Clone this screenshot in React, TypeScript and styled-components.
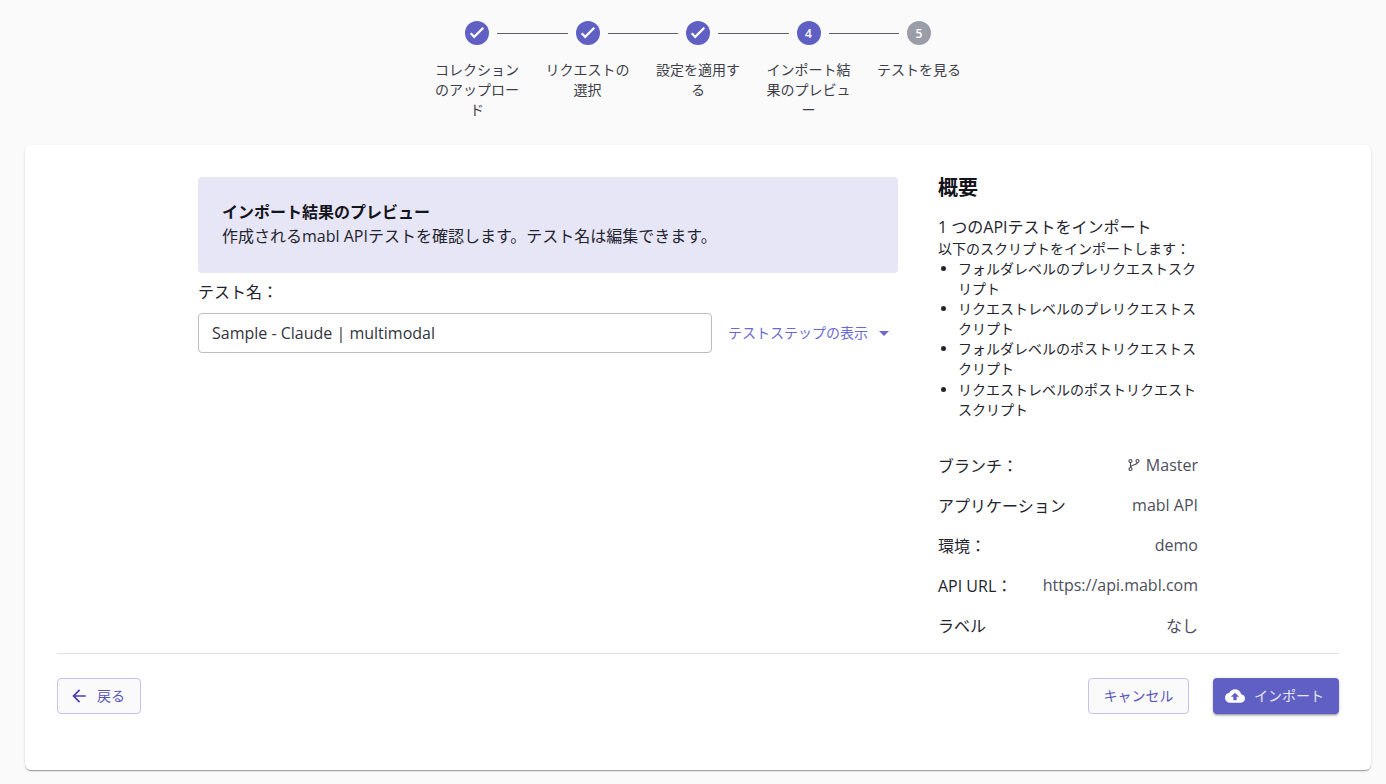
import React from "react";
import styled, { createGlobalStyle } from "styled-components";

const Global = createGlobalStyle`
  html, body { margin: 0; padding: 0; background: #fafafa; }
  body { font-family: "Open Sans", "Noto Sans CJK JP", sans-serif; color: #1c1c24; }
  * { box-sizing: border-box; }
`;

const Page = styled.div`
  width: 1386px;
  height: 784px;
  overflow: hidden;
  padding-left: 25px;
`;

const Content = styled.div`
  width: 1346px;
`;

const Stepper = styled.ol`
  list-style: none;
  margin: 0;
  padding: 21px 0 0;
  height: 145px;
  display: flex;
  justify-content: center;
`;

const Step = styled.li`
  width: 110.5px;
  padding: 0 8px;
  display: flex;
  flex-direction: column;
  align-items: center;
  position: relative;
`;

const Connector = styled.span`
  position: absolute;
  top: 12px;
  left: calc(-50% + 20px);
  right: calc(50% + 20px);
  height: 1px;
  background: #5d5e6b;
`;

const Circle = styled.span<{ $done: boolean }>`
  width: 24px;
  height: 24px;
  border-radius: 50%;
  background: ${(p) => (p.$done ? "#5f5fc4" : "#9a9ca8")};
  color: #fff;
  font-size: 12px;
  font-weight: 600;
  display: flex;
  align-items: center;
  justify-content: center;
`;

const StepLabel = styled.span`
  margin-top: 15px;
  width: 100%;
  font-size: 14px;
  line-height: 20px;
  text-align: center;
  color: #3d3e4a;
`;

const Card = styled.main`
  height: 625px;
  background: #fff;
  border-radius: 6px;
  padding: 32px 32px 0;
  box-shadow: 0 2px 1px -1px rgba(0,0,0,.2), 0 1px 1px 0 rgba(0,0,0,.14), 0 1px 3px 0 rgba(0,0,0,.12);
`;

const Columns = styled.div`
  height: 476px;
  display: flex;
  justify-content: center;
  gap: 40px;
`;

const LeftColumn = styled.section`
  width: 700px;
`;

const Banner = styled.div`
  height: 96px;
  padding: 23px 24px 0;
  border-radius: 4px;
  background: #e7e6f6;
  font-size: 16px;
  line-height: 24px;
  color: #24242e;
`;

const BannerTitle = styled.div`
  font-weight: 700;
  font-size: 16px;
  line-height: 24px;
  color: #14141c;
`;

const FieldLabel = styled.div`
  margin-top: 7px;
  font-size: 16px;
  line-height: 24px;
  color: #24242e;
`;

const FieldRow = styled.div`
  margin-top: 9px;
  display: flex;
  align-items: center;
`;

const NameInput = styled.input`
  width: 514px;
  height: 40px;
  padding: 0 13px;
  border: 1px solid #bcbcc2;
  border-radius: 4px;
  outline: none;
  font: 400 16px "Open Sans", "Noto Sans CJK JP", sans-serif;
  color: #33343e;
  background: #fff;
`;

const StepsToggle = styled.button`
  margin-left: 16px;
  padding: 0 0 2px;
  border: 0;
  background: none;
  display: flex;
  align-items: center;
  font: 400 14px "Open Sans", "Noto Sans CJK JP", sans-serif;
  color: #6a6ad0;
`;

const Caret = styled.span`
  margin-left: 11px;
  margin-top: 2px;
  width: 0;
  height: 0;
  border-left: 5px solid transparent;
  border-right: 5px solid transparent;
  border-top: 5px solid #6a6ad0;
`;

const Summary = styled.aside`
  width: 260px;
`;

const SummaryTitle = styled.h2`
  margin: 0;
  font-size: 20px;
  font-weight: 700;
  line-height: 22px;
  color: #14141c;
`;

const ImportCount = styled.div`
  margin-top: 16px;
  font-size: 16px;
  line-height: 24px;
  color: #24242e;
`;

const ImportNote = styled.div`
  font-size: 14px;
  line-height: 20px;
  color: #24242e;
`;

const ScriptList = styled.ul`
  margin: 0 0 25px;
  padding: 0 0 0 20px;
  font-size: 14px;
  line-height: 20.1px;
  color: #24242e;
`;

const Row = styled.div`
  height: 40px;
  display: flex;
  align-items: center;
  justify-content: space-between;
  font-size: 16px;
`;

const RowLabel = styled.span`
  color: #24242e;
`;

const RowValue = styled.span`
  display: flex;
  align-items: center;
  gap: 5px;
  color: #4d4e5c;
`;

const Footer = styled.footer`
  border-top: 1px solid #e0e0e4;
  padding-top: 24px;
  display: flex;
  justify-content: space-between;
`;

const Actions = styled.div`
  display: flex;
  gap: 24px;
`;

const OutlineButton = styled.button`
  height: 36px;
  padding: 0 14.5px 2px;
  display: flex;
  align-items: center;
  border: 1px solid #c5c3ee;
  border-radius: 4px;
  background: #fafafa;
  font: 400 14px "Open Sans", "Noto Sans CJK JP", sans-serif;
  color: #5a55b8;
`;

const BackButton = styled(OutlineButton)`
  padding: 0 15px 0 11px;
  gap: 8px;
`;

const BackText = styled.span`
  padding-bottom: 2px;
`;

const PrimaryButton = styled.button`
  height: 36px;
  padding: 0 15px 0 12px;
  display: flex;
  align-items: center;
  gap: 9px;
  border: 0;
  border-radius: 4px;
  background: #5f5fc4;
  font: 400 14px "Open Sans", "Noto Sans CJK JP", sans-serif;
  color: #e8e8f8;
  box-shadow: 0 3px 1px -2px rgba(0,0,0,.2), 0 2px 2px 0 rgba(0,0,0,.14), 0 1px 5px 0 rgba(0,0,0,.12);
`;

const PrimaryText = styled.span`
  padding-bottom: 2px;
`;

const Check = () => (
  <svg width="24" height="24" viewBox="0 0 24 24" fill="#fff">
    <path d="M9.2 17.4 4.9 13.1l1.6-1.6 2.7 2.7 8.3-8.3 1.6 1.6z" />
  </svg>
);

const BackArrow = () => (
  <svg width="20" height="20" viewBox="0 0 24 24" fill="#4a3fb0">
    <path d="M20 11H7.83l5.59-5.59L12 4l-8 8 8 8 1.41-1.41L7.83 13H20v-2z" />
  </svg>
);

const BranchIcon = () => (
  <svg width="14" height="14" viewBox="0 0 14 14" fill="none" stroke="#4d4e5c" strokeWidth="1.2">
    <circle cx="3.5" cy="3" r="1.5" />
    <circle cx="3.5" cy="11" r="1.5" />
    <circle cx="10.5" cy="3" r="1.5" />
    <path d="M3.5 4.5v5M10.5 4.5c0 2.5-7 2-7 5" />
  </svg>
);

const CloudUpload = () => (
  <svg width="20" height="20" viewBox="0 0 24 24" fill="#fff">
    <path d="M19.35 10.04C18.67 6.59 15.64 4 12 4 9.11 4 6.6 5.64 5.35 8.04 2.34 8.36 0 10.91 0 14c0 3.31 2.69 6 6 6h13c2.76 0 5-2.24 5-5 0-2.64-2.05-4.78-4.65-4.96zM14 13v4h-4v-4H7l5-5 5 5h-3z" />
  </svg>
);

const steps = [
  { label: "コレクションのアップロード", done: true },
  { label: "リクエストの選択", done: true },
  { label: "設定を適用する", done: true },
  { label: "インポート結果のプレビュー", done: false, active: true, n: 4 },
  { label: "テストを見る", done: false, n: 5 },
];

const scripts = [
  "フォルダレベルのプレリクエストスクリプト",
  "リクエストレベルのプレリクエストスクリプト",
  "フォルダレベルのポストリクエストスクリプト",
  "リクエストレベルのポストリクエストスクリプト",
];

export default function App() {
  return (
    <Page>
      <Global />
      <Content>
        <Stepper>
          {steps.map((s, i) => (
            <Step key={s.label}>
              {i > 0 && <Connector />}
              <Circle $done={s.done || !!s.active}>{s.done ? <Check /> : s.n}</Circle>
              <StepLabel>{s.label}</StepLabel>
            </Step>
          ))}
        </Stepper>
        <Card>
          <Columns>
            <LeftColumn>
              <Banner>
                <BannerTitle>インポート結果のプレビュー</BannerTitle>
                作成されるmabl APIテストを確認します。テスト名は編集できます。
              </Banner>
              <FieldLabel>テスト名：</FieldLabel>
              <FieldRow>
                <NameInput readOnly value="Sample - Claude | multimodal" />
                <StepsToggle>
                  テストステップの表示
                  <Caret />
                </StepsToggle>
              </FieldRow>
            </LeftColumn>
            <Summary>
              <SummaryTitle>概要</SummaryTitle>
              <ImportCount>1 つのAPIテストをインポート</ImportCount>
              <ImportNote>以下のスクリプトをインポートします：</ImportNote>
              <ScriptList>
                {scripts.map((s) => (
                  <li key={s}>{s}</li>
                ))}
              </ScriptList>
              <Row>
                <RowLabel>ブランチ：</RowLabel>
                <RowValue>
                  <BranchIcon />
                  Master
                </RowValue>
              </Row>
              <Row>
                <RowLabel>アプリケーション</RowLabel>
                <RowValue>mabl API</RowValue>
              </Row>
              <Row>
                <RowLabel>環境：</RowLabel>
                <RowValue>demo</RowValue>
              </Row>
              <Row>
                <RowLabel>API URL：</RowLabel>
                <RowValue>https://api.mabl.com</RowValue>
              </Row>
              <Row>
                <RowLabel>ラベル</RowLabel>
                <RowValue>なし</RowValue>
              </Row>
            </Summary>
          </Columns>
          <Footer>
            <BackButton>
              <BackArrow />
              <BackText>戻る</BackText>
            </BackButton>
            <Actions>
              <OutlineButton>キャンセル</OutlineButton>
              <PrimaryButton>
                <CloudUpload />
                <PrimaryText>インポート</PrimaryText>
              </PrimaryButton>
            </Actions>
          </Footer>
        </Card>
      </Content>
    </Page>
  );
}
